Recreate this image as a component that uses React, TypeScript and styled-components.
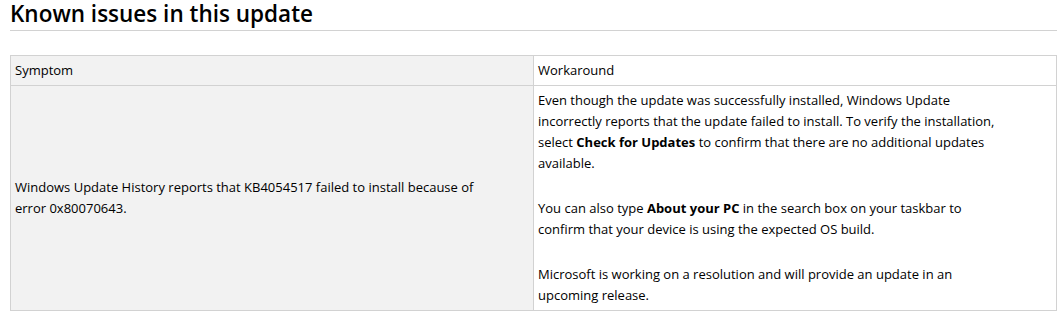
import React from "react";
import styled, { createGlobalStyle } from "styled-components";

const Global = createGlobalStyle`
  html, body { margin: 0; padding: 0; background: #fff; }
  body { font-family: "Segoe UI", "Open Sans", "Noto Sans", sans-serif; color: #000; }
`;

const Page = styled.div`
  padding: 0 5px 0 10px;
`;

const Heading = styled.h2`
  margin: 0 0 24px;
  font-size: 22.5px;
  line-height: 28px;
  font-weight: 600;
  color: #000;
  padding-bottom: 2px;
  border-bottom: 1px solid #d2d2d2;
`;

const Table = styled.table`
  width: 1047px;
  border-collapse: collapse;
  table-layout: fixed;
  font-size: 13px;
  line-height: 21px;
`;

const Cell = styled.td<{ $shaded?: boolean }>`
  border: 1px solid #d2d2d2;
  padding: 4px 50px 4px 4px;
  vertical-align: middle;
  background: ${(p) => (p.$shaded ? "#f2f2f2" : "#fff")};
  color: #000;
`;

const Para = styled.p`
  margin: 0 0 24px;
  &:last-child { margin-bottom: 0; }
`;

const Strong = styled.b`
  font-weight: 700;
`;

export default function App() {
  return (
    <Page>
      <Global />
      <Heading>Known issues in this update</Heading>
      <Table>
        <tbody>
          <tr>
            <Cell $shaded>Symptom</Cell>
            <Cell>Workaround</Cell>
          </tr>
          <tr>
            <Cell $shaded>
              Windows Update History reports that KB4054517 failed to install because of error 0x80070643.
            </Cell>
            <Cell>
              <Para>
                Even though the update was successfully installed, Windows Update incorrectly reports that the update failed to install. To verify the installation, select <Strong>Check for Updates</Strong> to confirm that there are no additional updates available.
              </Para>
              <Para>
                You can also type <Strong>About your PC</Strong> in the search box on your taskbar to confirm that your device is using the expected OS build.
              </Para>
              <Para>
                Microsoft is working on a resolution and will provide an update in an upcoming release.
              </Para>
            </Cell>
          </tr>
        </tbody>
      </Table>
    </Page>
  );
}
